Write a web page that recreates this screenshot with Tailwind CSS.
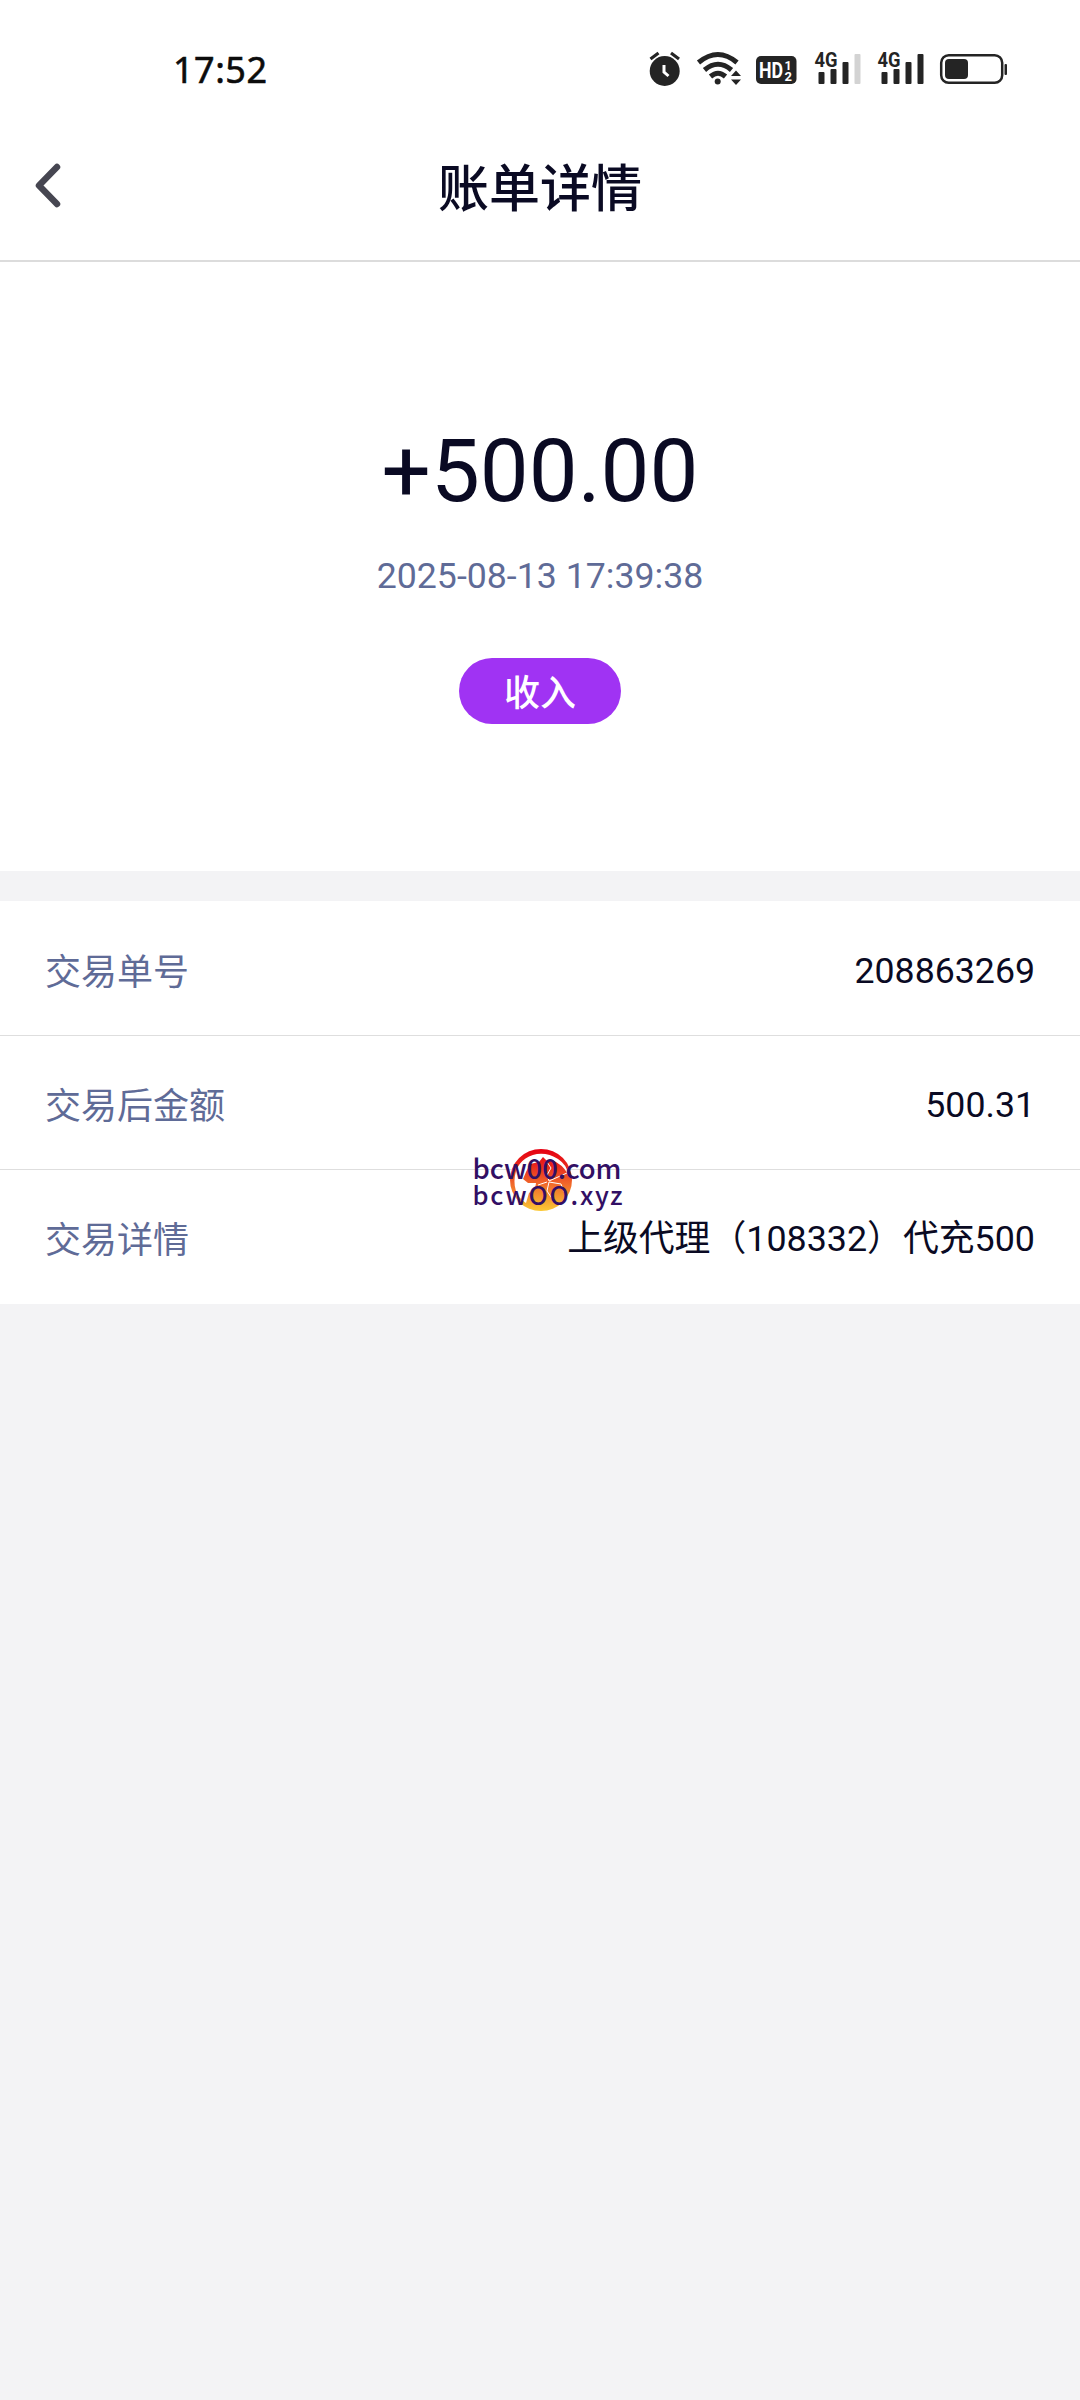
<!DOCTYPE html>
<html lang="zh-CN">
<head>
<meta charset="utf-8">
<title>账单详情</title>
<script src="https://cdn.jsdelivr.net/npm/@tailwindcss/browser@4"></script>
</head>
<body class="bg-[#f3f3f5]">
<div class="relative w-[1080px] h-[2400px] overflow-hidden bg-[#f3f3f5] text-[#0a0a23] font-[Roboto,'Noto_Sans_CJK_SC',sans-serif]">
  <!-- status bar -->
  <header class="flex h-[130px] items-start justify-between bg-white pl-[173px] pr-[70px] pt-[50px]">
    <div class="text-[36px] leading-[39px] tracking-[0.5px] text-[#0c0c0c] font-['Noto_Sans',sans-serif] [-webkit-text-stroke:0.6px_#0c0c0c]">17:52</div>
    <svg class="h-[40px] w-[370px] overflow-visible" viewBox="640 50 370 40" fill="#242424">
      <circle cx="664.700" cy="71" r="15"/>
      <path d="M650.500 59l8-6M679 59l-8-6" stroke="#242424" stroke-width="3.200" fill="none"/>
      <path d="M664 65v7l4.500 4" stroke="#fff" stroke-width="3" fill="none"/>
      <g fill="none" stroke="#242424" stroke-width="5">
        <path d="M698.500 62.500Q718 46.500 737 62.500"/><path d="M704.500 70Q718 58.500 731.500 70"/><path d="M710.500 76.500Q718 70 725.500 76.500"/>
      </g>
      <circle cx="717.700" cy="81.500" r="3"/>
      <path d="M731 76l5-5.500 5 5.500zM731 79.500l5 5.500 5-5.500z"/>
      <rect x="756" y="56" width="40.500" height="28" rx="5"/>
      <g fill="#fff" font-family="Roboto" font-weight="700"><text x="759" y="77.500" font-size="21.500" textLength="24" lengthAdjust="spacingAndGlyphs">HD</text><text x="784.500" y="69.500" font-size="12.500">1</text><text x="784.500" y="80.500" font-size="13">2</text></g>
      <g font-family="Roboto" font-weight="700" font-size="21"><text x="814.500" y="67" textLength="23" lengthAdjust="spacingAndGlyphs">4G</text><text x="877.500" y="67" textLength="23" lengthAdjust="spacingAndGlyphs">4G</text></g>
      <rect x="818.500" y="72" width="6" height="12" rx="1"/><rect x="830.500" y="69" width="6" height="15" rx="1"/><rect x="842.500" y="62" width="6" height="22" rx="1"/><rect x="854.500" y="54" width="6" height="30" rx="1" fill="#d3d3d3"/>
      <rect x="881.500" y="72" width="6" height="12" rx="1"/><rect x="893.500" y="69" width="6" height="15" rx="1"/><rect x="905.500" y="62" width="6" height="22" rx="1"/><rect x="917.500" y="54" width="6" height="30" rx="1"/>
      <rect x="941.200" y="55.200" width="61" height="27.600" rx="7.500" fill="none" stroke="#242424" stroke-width="2.500"/>
      <rect x="945" y="59" width="23" height="20" rx="4"/><rect x="1004.500" y="64" width="2.500" height="11" rx="1"/>
    </svg>
  </header>
  <!-- title bar -->
  <nav class="grid h-[132px] grid-cols-[200px_1fr_200px] items-start border-b-2 border-[#dcdcdc] bg-white">
    <svg class="ml-[30px] mt-[29px] h-[52px] w-[36px]" viewBox="30 159 36 52" fill="none" stroke="#464651" stroke-width="6.500" stroke-linecap="round" stroke-linejoin="round"><path d="M57 167L39 185.500 57 204"/></svg>
    <h1 class="mt-[23px] text-center text-[51px] leading-[74px] font-medium">账单详情</h1>
  </nav>
  <!-- amount -->
  <section class="flex h-[609px] flex-col items-center bg-white pt-[158px]">
    <div class="text-[87px] leading-[102px]">+500.00</div>
    <div class="mt-[33px] text-[35.700px] leading-[42px] text-[#5f6b97]">2025-08-13 17:39:38</div>
    <div class="mt-[61px] flex h-[66px] w-[162px] items-center justify-center rounded-full bg-[#a033f3] pt-[6px] text-[36px] leading-[60px] font-medium text-white">收入</div>
  </section>
  <!-- details -->
  <section class="mt-[30px] bg-white text-[35.700px]">
    <div class="flex h-[135px] items-center justify-between border-b border-[#dedede] px-[45px] pt-[7px]"><span class="pt-[2px] text-[36px] text-[#5f6b97]">交易单号</span><span>208863269</span></div>
    <div class="flex h-[134px] items-center justify-between border-b border-[#dedede] px-[45px] pt-[6px]"><span class="pt-[2px] text-[36px] text-[#5f6b97]">交易后金额</span><span>500.31</span></div>
    <div class="flex h-[134px] items-center justify-between px-[45px] pt-[6px]"><span class="pt-[2px] text-[36px] text-[#5f6b97]">交易详情</span><span class="text-[35.850px]">上级代理（108332）代充500</span></div>
  </section>
  <!-- floating watermark -->
  <svg class="absolute left-[460px] top-[1140px] h-[80px] w-[180px]" viewBox="0 0 180 80">
    <defs><linearGradient id="g" x1="0" y1="0" x2="0" y2="1"><stop offset="0" stop-color="#e60012"/><stop offset=".25" stop-color="#e8251b"/><stop offset=".55" stop-color="#f0652a"/><stop offset="1" stop-color="#fbc934"/></linearGradient></defs>
    <circle cx="81" cy="40" r="31" fill="url(#g)"/>
    <path d="M56 31C61 15 82 8 98 19Q107 25 108 34Q102 24 92 20L87 21 83 17 79 22 70 24 66 32 63 39 68 43 76 43 75 49 69 53 66 63C56 57 52 45 56 31Z" fill="#fff"/>
    <path d="M87 22l4 6-4 7 2 6 18-8M87 42l-9 3M89 42l12 2 3 8M89 42l-2 9 6 9" fill="none" stroke="#fff" stroke-width="1"/>
    <g fill="#320f64" font-family="Noto Sans CJK SC" font-weight="500"><text x="12.500" y="38.500" font-size="27.500" textLength="149" lengthAdjust="spacing">bcw00.com</text><text x="12.500" y="65" font-size="25.500" textLength="150" lengthAdjust="spacing">bcwOO.xyz</text></g>
  </svg>
</div>
</body>
</html>
